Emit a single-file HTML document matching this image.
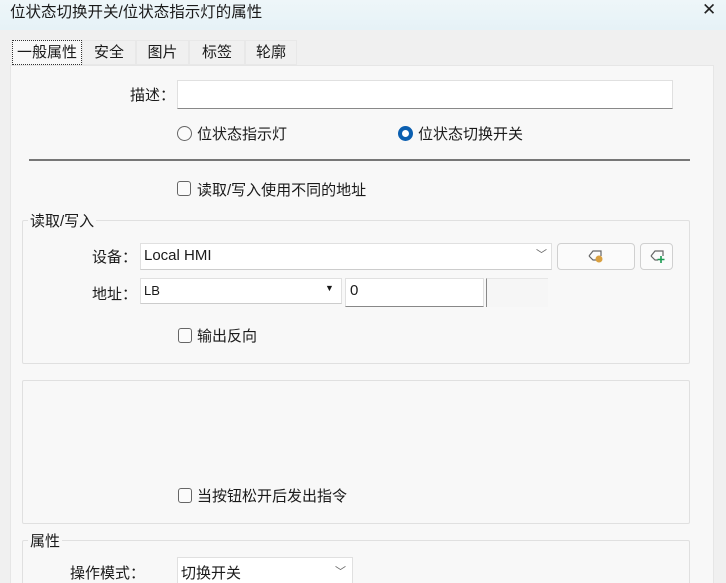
<!DOCTYPE html>
<html><head><meta charset="utf-8"><style>
*{margin:0;padding:0;box-sizing:border-box}
html{overflow:hidden;width:726px;height:583px}
body{width:726px;height:583px;overflow:hidden;background:#f0f0f0;font-family:"Liberation Sans","Noto Sans CJK SC",sans-serif;font-size:15px;color:#1a1a1a;position:relative}
.a{position:absolute;white-space:nowrap}
.title{left:0;top:0;width:726px;height:30px;background:linear-gradient(#eef6f9,#e6f2f7)}
.inp{background:#fff;border:1px solid #e0e0e0;border-bottom:1px solid #888}
.btn{background:#fbfbfb;border:1px solid #d0d0d0;border-radius:4px}
.grp{border:1px solid #e0e0e0;border-radius:2px}
.cb{width:14px;height:15px;border:1px solid #666;border-radius:3px;background:#fbfbfb}
.tab{top:40px;height:25px;background:#f0f0f0;border:1px solid #e8e8e8;text-align:center;line-height:24px}
</style></head><body>
<div class="a title"></div>
<div class="a" style="left:10px;top:0px;font-size:15.5px">位状态切换开关/位状态指示灯的属性</div>
<div class="a" style="left:702px;top:0px;font-size:17px;color:#222">✕</div>
<div class="a" style="left:10px;top:65px;width:704px;height:530px;background:#f8f8f8;border:1px solid #e6e6e6"></div>
<div class="a tab" style="left:82px;width:54px">安全</div>
<div class="a tab" style="left:136px;width:53px">图片</div>
<div class="a tab" style="left:189px;width:56px">标签</div>
<div class="a tab" style="left:245px;width:52px">轮廓</div>
<div class="a" style="left:12px;top:40px;width:70px;height:25px;background:#f8f8f8;border:1px dotted #333;text-align:center;line-height:23px">一般属性</div>
<div class="a" style="left:130px;top:84px">描述：</div>
<div class="a inp" style="left:177px;top:80px;width:496px;height:29px"></div>
<div class="a" style="left:177px;top:126px;width:15px;height:15px;border:1px solid #666;border-radius:50%;background:#fbfbfb"></div>
<div class="a" style="left:197px;top:123px">位状态指示灯</div>
<div class="a" style="left:398px;top:126px;width:15px;height:15px;border:4px solid #0b5fb0;border-radius:50%;background:#fff"></div>
<div class="a" style="left:418px;top:123px">位状态切换开关</div>
<div class="a" style="left:29px;top:159px;width:661px;height:2px;background:#777"></div>
<div class="a cb" style="left:177px;top:181px"></div>
<div class="a" style="left:197px;top:179px">读取/写入使用不同的地址</div>
<div class="a grp" style="left:22px;top:220px;width:668px;height:144px"></div>
<div class="a" style="left:28px;top:210px;background:#f8f8f8;padding:0 2px">读取/写入</div>
<div class="a" style="left:92px;top:246px">设备：</div>
<div class="a inp" style="left:140px;top:243px;width:412px;height:27px;border-bottom-color:#ccc;padding:3px 3px;font-size:15px">Local HMI</div>
<div class="a" style="left:536px;top:246px;font-size:11px;color:#666">﹀</div>
<div class="a btn" style="left:557px;top:243px;width:78px;height:27px"></div>
<svg class="a" style="left:586px;top:248px" width="20" height="16"><path d="M3 8 L7 3 H15 V8" fill="none" stroke="#666" stroke-width="1.2"/><path d="M3 8 L7 12 H10" fill="none" stroke="#666" stroke-width="1.2"/><circle cx="13" cy="11" r="3.5" fill="#d9a040"/></svg>
<div class="a btn" style="left:640px;top:243px;width:33px;height:27px"></div>
<svg class="a" style="left:648px;top:248px" width="20" height="16"><path d="M3 8 L7 3 H15 V8" fill="none" stroke="#666" stroke-width="1.2"/><path d="M3 8 L7 12 H10" fill="none" stroke="#666" stroke-width="1.2"/><path d="M13 8 V15 M9.5 11.5 H16.5" stroke="#1a9a50" stroke-width="1.6"/></svg>
<div class="a" style="left:92px;top:283px">地址：</div>
<div class="a inp" style="left:140px;top:278px;width:202px;height:26px;border-bottom-color:#ccc;padding:4px 3px;font-size:13px">LB</div>
<div class="a" style="left:325px;top:283px;font-size:9px">▼</div>
<div class="a inp" style="left:345px;top:278px;width:139px;height:29px;padding:3px 4px;font-size:15px">0</div>
<div class="a" style="left:486px;top:278px;width:62px;height:29px;border-left:1px solid #888;border-top:1px solid #e6e6e6;background:#f6f6f6"></div>
<div class="a cb" style="left:178px;top:328px"></div>
<div class="a" style="left:197px;top:325px">输出反向</div>
<div class="a grp" style="left:22px;top:380px;width:668px;height:144px"></div>
<div class="a cb" style="left:178px;top:488px"></div>
<div class="a" style="left:197px;top:485px">当按钮松开后发出指令</div>
<div class="a grp" style="left:22px;top:540px;width:668px;height:50px"></div>
<div class="a" style="left:28px;top:530px;background:#f8f8f8;padding:0 2px">属性</div>
<div class="a" style="left:70px;top:562px">操作模式：</div>
<div class="a inp" style="left:177px;top:557px;width:176px;height:30px;border-bottom-color:#ccc;padding:4px 3px">切换开关</div>
<div class="a" style="left:335px;top:563px;font-size:11px;color:#666">﹀</div>
</body></html>
